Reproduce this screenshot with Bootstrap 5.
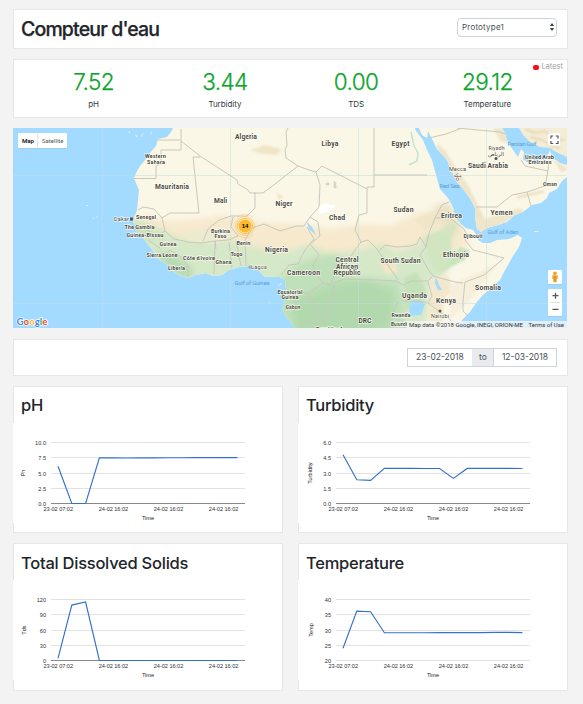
<!DOCTYPE html>
<html lang="fr">
<head>
<meta charset="utf-8">
<meta name="viewport" content="width=device-width, initial-scale=1">
<title>Compteur d'eau</title>
<link rel="stylesheet" href="https://cdn.jsdelivr.net/npm/bootstrap@5.3.0/dist/css/bootstrap.min.css">
<style>
body{background:#f3f3f3;font-family:Inter,"Liberation Sans",sans-serif;color:#212529;overflow:hidden}
.page{width:555px;margin:9px 0 0 13px;gap:10px}
.panel{background:#fff;border:1px solid #e7e7e7}
.head-panel{height:40px;padding:0 10px 0 7px}
.head-panel h1{font-size:19.5px;font-weight:500;line-height:24px;letter-spacing:-.85px;-webkit-text-stroke:.25px #212529}
.device{width:100px;height:19px;border:1px solid #ced4da;border-radius:4px;font-size:8px;padding:0 2px 0 4px;color:#495057;margin-top:-4px;letter-spacing:.2px}
.stats{height:59px;padding:0 14px;position:relative}
.stat-value{font-size:22.5px;line-height:28px;color:#0da52c;margin-top:8px;font-weight:300;letter-spacing:-.6px;-webkit-text-stroke:.25px #0da52c}
.stat-name{font-size:8px;line-height:12px;margin-top:2px;letter-spacing:-.05px;color:#343a40}
.latest{position:absolute;right:4px;top:2px;gap:2px;font-size:7.5px;line-height:10px;color:#a0a0a0}
.latest i{width:6px;height:5px;border-radius:2px;background:#fb0d1b}
.map-box{width:554px;height:200px}
.map-box svg,.plot svg{display:block}
.dates{height:37px;padding-right:10px;margin-top:1px}
.dates .input-group{width:150px;height:19px}
.dates .input-group>*{border:1px solid #ced4da;border-radius:0;font-size:8.5px;line-height:17px;padding:0;text-align:center;color:#495057;letter-spacing:0}
.dates .mid{width:22px;background:#e9ecef}
.plots{display:grid;grid-template-columns:270px 270px;grid-template-rows:147px 148px;gap:10px 15px}
.plot h2{font-size:16.5px;font-weight:500;line-height:20px;height:36px;margin:0;padding:8px 0 0 7px;letter-spacing:-.25px}
.plots .plot:nth-child(n+3) h2{padding-top:9px}
.plot svg{margin-left:-1px;background:#fff}
</style>
<script src="https://cdn.jsdelivr.net/npm/bootstrap@5.3.0/dist/js/bootstrap.bundle.min.js"></script>
</head>
<body>
<main class="page d-flex flex-column">
  <header class="panel head-panel d-flex align-items-center justify-content-between">
    <h1 class="m-0">Compteur d'eau</h1>
    <div class="device d-flex align-items-center justify-content-between" role="button">
      <span>Prototype1</span>
      <svg width="4" height="8" viewBox="0 0 4 8"><path d="M2 0L4 3H0zM2 8L4 5H0z" fill="#343a40"/></svg>
    </div>
  </header>

  <section class="panel stats">
    <div class="row g-0 text-center">
      <div class="col-3"><div class="stat-value">7.52</div><div class="stat-name">pH</div></div>
      <div class="col-3"><div class="stat-value">3.44</div><div class="stat-name">Turbidity</div></div>
      <div class="col-3"><div class="stat-value">0.00</div><div class="stat-name">TDS</div></div>
      <div class="col-3"><div class="stat-value">29.12</div><div class="stat-name">Temperature</div></div>
    </div>
    <div class="latest d-flex align-items-center"><i></i><span>Latest</span></div>
  </section>

  <section class="map-box">
    <svg width="554" height="200" viewBox="13 128 554 200" font-family="Roboto, sans-serif">
      <defs>
        <path id="africa" d="M174 126L171 132L167 137L158 139L156 146L150 153L146 159L140 166L136 173L134 178L136 183L139 190L138 200L137 210L134 218L133 222L136 227L136 232L144 239L150 247L155 253L158 259L166 264L171 270L180 276L188 278L196 275L206 273L213 276L222 275L229 270L239 267L250 266L257 268L262 274L265 277L273 277L280 277L285 280L286 290L283 297L285 303L282 308L286 317L292 323L296 330L457 330L462 320L470 312L476 303L483 295L492 287L500 280L504 272L508 265L513 256L519 247L522 238L518 235L509 239L497 240L490 243L483 243L478 240L476 234L473 230L466 228L462 225L455 217L453 207L448 198L440 189L436 175L432 160L427 150L423 140L416 131L414 126Z"/>
        <path id="arabia" d="M418 126L422 135L427 138L428 131L433 141L437 149L447 160L451 170L456 181L464 190L471 200L475 208L475 218L477 229L481 232L487 228L498 225L507 222L515 215L523 212L532 205L541 203L547 198L549 193L557 189L562 181L567 177V165L560 163L552 157L550 150L546 159L535 162L527 162L523 159L524 152L521 149L518 157L513 150L508 143L505 133L501 126Z"/>
        <clipPath id="land"><use href="#africa"/></clipPath>
        <clipPath id="land2"><use href="#arabia"/></clipPath>
        <filter id="soft" x="-20%" y="-20%" width="140%" height="140%"><feGaussianBlur stdDeviation="3"/></filter>
        <filter id="soft2" x="-20%" y="-20%" width="140%" height="140%"><feGaussianBlur stdDeviation="1.3"/></filter>
      </defs>
      <rect x="13" y="128" width="554" height="200" fill="#a3daff"/>
      <use href="#africa" fill="#fbf7e7"/>
      <use href="#arabia" fill="#fbf7e7"/>
      <path d="M518 126L523 135L530 142L540 147L550 148L556 152L567 157V126Z" fill="#f4edd6"/>
      <g clip-path="url(#land)">
        <g filter="url(#soft)">
          <path d="M120 219L150 215L165 221L200 219L222 215L260 222L300 224L330 229L365 224L390 226L415 214L440 208L462 228L470 245L445 262L300 252L120 245Z" fill="#f6e9ce"/>
          <path d="M125 229L160 228L180 238L205 241L230 240L255 247L285 252L310 244L330 254L355 250L385 244L395 252L417 245L430 232L448 232L455 258L445 274L432 282L430 300L426 335H280L250 290H160Z" fill="#d5e8c8"/>
          <path d="M300 262L335 252L345 262L335 274L400 281L405 305L402 335H280L272 285Z" fill="#bfe0b8"/>
          <path d="M330 285L365 280L392 290L395 310L385 335H295L292 300Z" fill="#b2d9ad"/>
          <path d="M155 250L174 255L194 270L190 280L170 272Z" fill="#b6dbb5"/>
          <path d="M120 216L150 224L165 237L150 240L130 235Z" fill="#cbe4be"/>
          <path d="M434 205L450 203L462 226L458 236L440 225Z" fill="#e9e3c4"/>
        </g>
        <g filter="url(#soft2)">
          <path d="M424 238L440 230L452 222L456 226L450 246L456 262L440 275L430 262Z" fill="#cfe5bf" opacity=".8"/>
          <path d="M460 247L470 250L465 260L446 269L448 262Z" fill="#c9e4bd"/>
          <path d="M404 278L416 272L425 287L424 300L405 310Z" fill="#c4e2b9"/>
          <path d="M430 278L448 275L452 290L444 300L442 327L428 320Z" fill="#f2e8cd"/>
          <path d="M450 285L500 262L470 300L450 320Z" fill="#f6efdc"/>
          <path d="M250 150L265 145L282 149L277 155L262 154ZM414 220L432 212L440 222L425 230ZM380 264L396 262L398 272L386 274ZM276 193L284 196L279 200Z" fill="#f1e5c8"/>
          <path d="M183 232L215 228L230 235L218 243L190 242Z" fill="#ecebd0"/>
        </g>
        <path d="M410 303L414 300L422 301L425 304L421 315L411 316L409 309ZM436 277L439 285L442 290L438 290L435 283ZM307 222L312 227L316 235L309 229ZM402 317L404 325L407 328L403 328Z" fill="#a3daff"/>
        <path d="M409 165L417 161L418 153L414 146L411 132" fill="none" stroke="#c1e4cf" stroke-width="1.5"/>
        <path d="M318 207L325 203L336 206L328 212L319 214Z" fill="#fff"/>
        <path d="M326 183h3v2h-3zM334 181l2 2v5h-2zM338 175l4-3M333 187h5" fill="#d5d2c4" stroke="#dbd7c8" stroke-width=".6"/>
      </g>
      <g clip-path="url(#land2)" filter="url(#soft2)">
        <path d="M437 143L446 151L456 169L467 183L478 205L485 219L520 208L524 212L480 236L464 200L438 155ZM493 128L503 128L510 144L500 141Z" fill="#eee5ca"/>
        <path d="M552 158L568 169L562 173ZM516 196L543 190L545 193L518 199Z" fill="#eee3c7"/>
      </g>
      <path d="M525 129L535 133L545 131L554 139L565 140M530 137L542 140L550 145L560 148" stroke="#e5d8b6" stroke-width="2" fill="none" filter="url(#soft2)"/>
      <g fill="#e9eddc"><path d="M128 132l2-1v2zM135 135l3 1-2 1zM141 137l2-2 1-3-3 4zM150 134l2-3-1 4zM86 205h2v1h-2zM96 216l2 1-1 1zM93 218h1v1h-1zM534 231h5v1h-5zM278 286l3-3 1 1-3 2zM269 302h1v1h-1z"/></g>
      <!-- graticule -->
      <path d="M102.500 128V328M230.500 128V328M358.500 128V328M486.500 128V328M13 175.500H567M13 303.500H567" stroke="#c4dfd9" stroke-opacity=".5" stroke-width="1" fill="none"/>
      <!-- national borders -->
      <g fill="none" stroke="#c9c8bd" stroke-width="1" stroke-linejoin="round">
        <path d="M134 178.500H156V166L161 164V150H181V129M158 140H180" />
        <path d="M181 141L200 156L237 180L238 184L248 190L250 193H263L275 184L298 166L286 158L285 150L287 145L286 132L288 128"/>
        <path d="M200 157H193L199 213H170L162 218L154 209L143 207L138 210"/>
        <path d="M298 166L309 170L316 172L322 166L367 189V187H374V128M374 175H427M367 189V213L359 215L355 230L361 242"/>
        <path d="M316 172L320 185L319 207L310 217L304 226L296 226L280 231L264 224L252 228M255 192V208L247 216H231L219 220L208 229L203 241"/>
        <path d="M162 218L165 231L174 239L184 241L188 242L201 243L215 241L216 249M135 229L148 230L155 236L162 233L165 231M148 240L160 248"/>
        <path d="M161 260L170 250L180 256L188 266V277M215 241L214 274M229 242L232 268M236 241L241 266M252 228L245 240L246 266M215 241L228 240L238 236L231 227L233 217"/>
        <path d="M307 227L314 239L305 250L298 264L289 265L281 275M310 217L318 222L320 236L310 244L319 255L313 265L317 275L323 283L330 285L333 279L337 264L350 257L361 242L368 240L377 249L387 264L398 280"/>
        <path d="M323 283L309 293V300L322 315L305 323M309 293H285M334 285L331 300L324 322L310 323M334 283L344 279L377 280L396 281L403 285M380 250L385 245L397 247L410 246L417 244L420 237L426 247L420 255L428 269L433 276L440 278L455 282L463 283M426 247L429 233L435 218L442 205L449 202M435 218L450 218L464 229L467 235L465 240L473 250L504 258L484 275L465 282L463 301V311L467 315M403 285L412 281H428L432 277M428 282L432 296L428 303L448 318L458 327M402 301L427 302M398 302L392 315V328M476 207H497L512 195L527 192L531 206M527 192L545 186L548 171L525 166L521 160M548 171L549 161"/>
        <path d="M429 138L446 134L462 128M457 128L500 132L505 134"/>
      </g>
      <!-- place names -->
      <g font-size="6.800" font-weight="700" fill="#4a4a48" text-anchor="middle" stroke="#fffdf2" stroke-width="1.400" stroke-opacity=".75" paint-order="stroke" lengthAdjust="spacingAndGlyphs">
        <text x="246" y="138.500" textLength="22">Algeria</text>
        <text x="330" y="146" textLength="17">Libya</text>
        <text x="400.500" y="146" textLength="18">Egypt</text>
        <text x="172" y="188.500" textLength="34">Mauritania</text>
        <text x="220.500" y="203" textLength="13">Mali</text>
        <text x="284" y="206" textLength="17">Niger</text>
        <text x="337" y="219.500" textLength="16">Chad</text>
        <text x="403.500" y="212" textLength="20">Sudan</text>
        <text x="451.500" y="217.500" textLength="21">Eritrea</text>
        <text x="501.500" y="215" textLength="22">Yemen</text>
        <text x="488" y="167.500" textLength="40">Saudi Arabia</text>
        <text x="276.500" y="251.500" textLength="23">Nigeria</text>
        <text x="303.500" y="274.500" textLength="33">Cameroon</text>
        <text x="347" y="262" textLength="23">Central</text>
        <text x="347" y="268.500" textLength="22">African</text>
        <text x="347" y="275" textLength="27">Republic</text>
        <text x="400.500" y="263" textLength="40">South Sudan</text>
        <text x="456" y="257" textLength="26">Ethiopia</text>
        <text x="488" y="290" textLength="26">Somalia</text>
        <text x="414.500" y="297.500" textLength="25">Uganda</text>
        <text x="446" y="303" textLength="20">Kenya</text>
        <text x="365" y="322.500" textLength="13">DRC</text>
        <g font-size="5.600">
          <text x="155.500" y="158" textLength="21">Western</text>
          <text x="156" y="163.500" textLength="18">Sahara</text>
          <text x="146" y="219" textLength="20">Senegal</text>
          <text x="139.500" y="228.500" textLength="30">The Gambia</text>
          <text x="145" y="236.500" textLength="37">Guinea-Bissau</text>
          <text x="168" y="246" textLength="17">Guinea</text>
          <text x="162" y="256.500" textLength="31">Sierra Leone</text>
          <text x="176.500" y="269.500" textLength="17">Liberia</text>
          <text x="199" y="259.500" textLength="32">Côte d'Ivoire</text>
          <text x="220.500" y="232.500" textLength="19">Burkina</text>
          <text x="220.500" y="238" textLength="12">Faso</text>
          <text x="243.500" y="245" textLength="14">Benin</text>
          <text x="236.500" y="256" textLength="12">Togo</text>
          <text x="223.500" y="263.500" textLength="16">Ghana</text>
          <text x="290" y="294" textLength="25">Equatorial</text>
          <text x="290" y="299" textLength="17">Guinea</text>
          <text x="293" y="309" textLength="15">Gabon</text>
          <text x="473" y="238" textLength="19">Djibouti</text>
          <text x="539.500" y="158.500" textLength="29">United Arab</text>
          <text x="540" y="164" textLength="23">Emirates</text>
          <text x="550" y="186" textLength="14">Oman</text>
          <text x="401" y="317" textLength="19">Rwanda</text>
          <text x="399" y="325.500" textLength="16">Burundi</text>
          <text x="329" y="331" textLength="26">Republic of</text>
        </g>
        <g font-size="5.600" font-weight="400">
          <text x="121.500" y="221" textLength="15">Dakar</text>
          <text x="259" y="268.500" textLength="16">Lagos</text>
          <text x="457.500" y="171" textLength="17">Mecca</text>
          <text x="457.500" y="176.500" font-family="'DejaVu Sans'" font-size="5">مكة</text>
          <text x="496.500" y="150" textLength="16">Riyadh</text>
          <text x="496" y="156" font-family="'DejaVu Sans'" font-size="5.500">الرياض</text>
          <text x="440" y="318" textLength="18">Nairobi</text>
        </g>
        <g font-size="5.800" font-weight="400" fill="#5a9fd6" stroke="none">
          <text x="449.500" y="187.500" textLength="20">Red Sea</text>
          <text x="522" y="145.500" textLength="29">Persian Gulf</text>
          <text x="503" y="233.500" textLength="31">Gulf of Aden</text>
          <text x="252" y="284.500" textLength="35">Gulf of Guinea</text>
        </g>
      </g>
      <g fill="#555"><rect x="130" y="217.500" width="3" height="3"/><circle cx="496" cy="158.500" r="1.500"/><circle cx="440" cy="311" r="1.500"/></g>
      <g fill="#fff" stroke="#777" stroke-width=".7"><circle cx="457.500" cy="179" r="1.300"/><circle cx="250" cy="267" r="1.100"/></g>
      <!-- marker cluster -->
      <g fill="none" stroke="#fbb52d" stroke-width="1"><circle cx="245" cy="226" r="7.700" opacity=".75"/><circle cx="245" cy="226" r="9.500" opacity=".5"/><path d="M237 217.500A11.500 11.500 0 0 1 253 217.500M237 234.500A11.500 11.500 0 0 0 253 234.500" opacity=".35"/></g>
      <circle cx="245" cy="226" r="6.500" fill="#fdbb2c"/>
      <text x="245" y="228.200" font-size="6" font-weight="700" font-family="Liberation Sans, sans-serif" text-anchor="middle">14</text>
      <!-- controls -->
      <g fill="#fff">
        <rect x="18" y="133.500" width="49" height="15" rx="1" fill="#6f8998" opacity=".25"/>
        <rect x="18" y="133" width="49" height="15" rx="1"/>
        <rect x="548" y="133.500" width="12" height="12" rx="1"/>
        <rect x="548" y="270.500" width="14" height="14" rx="1" fill="#607d8b" opacity=".25"/>
        <rect x="548" y="270" width="14" height="14" rx="1"/>
        <rect x="548" y="289.500" width="14" height="27" rx="1" fill="#607d8b" opacity=".25"/>
        <rect x="548" y="289" width="14" height="27" rx="1"/>
      </g>
      <path d="M37.500 134V147M550 302.500H560" stroke="#e3e3e3"/>
      <text x="22" y="143" font-size="6.200" font-weight="500" textLength="12" lengthAdjust="spacingAndGlyphs">Map</text>
      <text x="42" y="143" font-size="6.200" fill="#555" textLength="21.500" lengthAdjust="spacingAndGlyphs">Satellite</text>
      <path d="M551 138.500V136H553.200M555.800 136H558V138.500M558 141V143.500H555.800M553.200 143.500H551V141" fill="none" stroke="#555" stroke-width="1.200"/>
      <g fill="#f0a52e"><circle cx="555" cy="273.300" r="1.900"/><path d="M552.300 275.300h5.400v3.700h-1v3.200h-3.400v-3.200h-1z"/></g><path d="M554.800 276v5" stroke="#d38320" stroke-width=".8"/>
      <path d="M552.500 295.700H558.500M555.500 292.700V298.700M552.500 309.400H558.500" stroke="#555" stroke-width="1.300"/>
      <rect x="407" y="321" width="160" height="7" fill="#f5f5f5" opacity=".75"/>
      <g font-size="6" fill="#333"><text x="409" y="327" textLength="114" lengthAdjust="spacingAndGlyphs">Map data ©2018 Google, INEGI, ORION-ME</text><text x="528.500" y="327" textLength="35.500" lengthAdjust="spacingAndGlyphs">Terms of Use</text></g>
      <text x="16.500" y="324.500" font-family="Lato, sans-serif" font-size="10.200" font-weight="700" textLength="31" lengthAdjust="spacingAndGlyphs" stroke="#fff" stroke-width="1.600" paint-order="stroke"><tspan fill="#4285f4">G</tspan><tspan fill="#ea4335">o</tspan><tspan fill="#fbbc05">o</tspan><tspan fill="#4285f4">g</tspan><tspan fill="#34a853">l</tspan><tspan fill="#ea4335">e</tspan></text>
    </svg>
  </section>

  <section class="panel dates d-flex align-items-center justify-content-end">
    <div class="input-group flex-nowrap">
      <div class="flex-fill bg-white">23-02-2018</div><div class="mid border-start-0 border-end-0">to</div><div class="flex-fill bg-white">12-03-2018</div>
    </div>
  </section>

  <section class="plots">
    <article class="panel plot" data-kind="ph"><h2>pH</h2></article>
    <article class="panel plot" data-kind="turbidity"><h2>Turbidity</h2></article>
    <article class="panel plot" data-kind="tds"><h2>Total Dissolved Solids</h2></article>
    <article class="panel plot" data-kind="temp"><h2>Temperature</h2></article>
  </section>
</main>
<script>
const series = {
  ph: {label:'Ph', x:12, ticks:['10.0','7.5','5.0','2.5','0.0'], min:0, max:10, v:[6.1,0,0,7.5,7.48,7.46,7.48,7.49,7.5,7.5,7.51,7.51,7.52,7.52]},
  turbidity: {label:'Turbidity', x:14, ticks:['6.0','4.5','3.0','1.5','0.0'], min:0, max:6, v:[4.8,2.33,2.27,3.45,3.45,3.45,3.44,3.44,2.47,3.45,3.45,3.45,3.45,3.44]},
  tds: {label:'Tds', x:13, ticks:['120','90','60','30','0'], min:0, max:120, v:[4,109,115,0,0,0,0,0,0,0,0,0,0,0]},
  temp: {label:'Temp', x:15, ticks:['40','35','30','25','20'], min:20, max:40, v:[24,36.2,36,29.1,29.1,29.1,29.1,29.15,29.15,29.15,29.15,29.2,29.2,29.12]}
};
document.querySelectorAll('.plot').forEach(card => {
  const s = series[card.dataset.kind];
  const ys = [19.5, 34.5, 50.5, 65.5, 80.5];
  let out = '<svg width="250" height="100" viewBox="0 0 250 100" font-family="Liberation Sans, sans-serif" font-size="5.6" fill="#333">';
  s.ticks.forEach((t, i) => {
    const base = i === 4 && s.min === 0;
    out += `<path d="M38 ${ys[i]}H232" stroke="${base ? '#888' : '#e2e2e2'}"/><text x="33" y="${ys[i] + 2}" text-anchor="end">${t}</text>`;
  });
  ['23-02 07:02','24-02 16:02','24-02 16:02','24-02 16:02'].forEach((t, i) => {
    out += `<text x="${45.3 + i * 55.1}" y="88" text-anchor="middle" textLength="29.5">${t}</text>`;
  });
  out += `<text x="135" y="97" text-anchor="middle" fill="#222">Time</text>`;
  out += `<text transform="translate(${s.x} 50) rotate(-90)" text-anchor="middle" fill="#222">${s.label}</text>`;
  const pts = s.v.map((v, i) => `${(45 + i * 13.8).toFixed(1)},${(80.5 - (v - s.min) / (s.max - s.min) * 61).toFixed(2)}`).join(' ');
  out += `<polyline points="${pts}" fill="none" stroke="#3471c9" stroke-width="1.15"/></svg>`;
  card.insertAdjacentHTML('beforeend', out);
});
</script>
</body>
</html>
